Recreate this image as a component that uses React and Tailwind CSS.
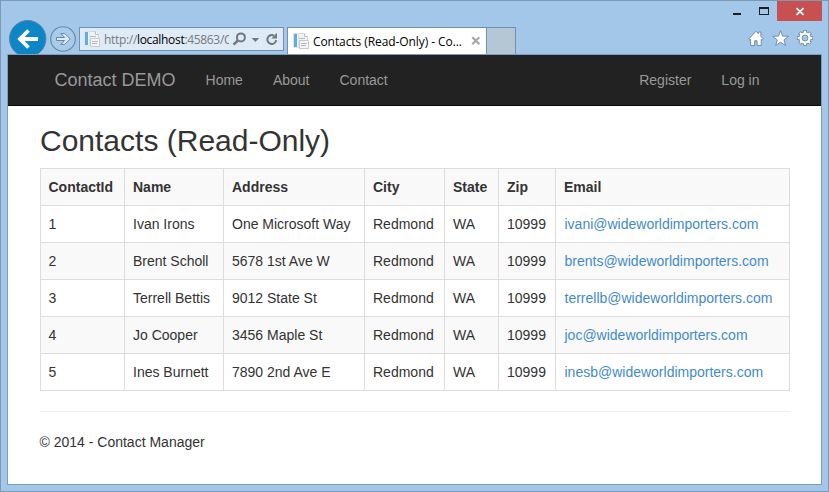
import React from "react";

const contacts = [
  ["1", "Ivan Irons", "One Microsoft Way", "Redmond", "WA", "10999", "ivani@wideworldimporters.com"],
  ["2", "Brent Scholl", "5678 1st Ave W", "Redmond", "WA", "10999", "brents@wideworldimporters.com"],
  ["3", "Terrell Bettis", "9012 State St", "Redmond", "WA", "10999", "terrellb@wideworldimporters.com"],
  ["4", "Jo Cooper", "3456 Maple St", "Redmond", "WA", "10999", "joc@wideworldimporters.com"],
  ["5", "Ines Burnett", "7890 2nd Ave E", "Redmond", "WA", "10999", "inesb@wideworldimporters.com"],
];
const headings = ["ContactId", "Name", "Address", "City", "State", "Zip", "Email"];

function PageIcon({ className }) {
  return (
    <svg className={className} width="16" height="16" viewBox="0 0 16 16">
      <path d="M4.5.5h7l3 3v5h-10z" fill="#f1f2f3" stroke="#d3d7db" />
      <path d="M11.5.5v3h3" fill="#fff" stroke="#b9bec3" />
      <path d="M6.5 7.5h9v8h-9z" fill="#f4f4f5" stroke="#c6cacf" />
      <path d="M6 5.5h6M8 10.5h6M8 12.5h5" stroke="#b4bac0" />
      <path d="M.5.5h5v14h-5z" fill="#eef3f7" stroke="#dce4ea" />
      <path d="M1 1h3v13H1z" fill="#62addb" />
    </svg>
  );
}

function WindowButtons() {
  return (
    <div className="flex h-[20px] shrink-0 justify-end pr-[6px]">
      <svg width="52" height="20" viewBox="725 1 52 20">
        <path d="M733 13h8v2h-8z" fill="#1e1e1e" />
        <path d="M759 7h10v8h-10zM760 9v5h8V9z" fill="#1e1e1e" fillRule="evenodd" />
      </svg>
      <div className="h-[20px] w-[45px] bg-[#c75050]">
        <svg width="45" height="20" viewBox="777 1 45 20">
          <path d="M796.5 8.2l7 6.6M803.5 8.2l-7 6.6" stroke="#fff" strokeWidth="1.7" />
        </svg>
      </div>
    </div>
  );
}

function NavigationBar() {
  return (
    <div className="flex h-[33px] shrink-0">
      <svg className="-mt-px shrink-0" width="78" height="34" viewBox="1 20 78 34">
        <circle cx="27.7" cy="38.7" r="18.2" fill="#0c86c6" stroke="#5f7f9c" />
        <path d="M38 39H20M28.5 30.5l-8.5 8.5 8.5 8.5" fill="none" stroke="#fff" strokeWidth="3.8" />
        <circle cx="63" cy="39" r="12.3" fill="#a9cbea" stroke="#6585a5" strokeWidth="1.1" />
        <path d="M56.5 37.5h8.2l-3.9-3.9h4l5.4 5.4-5.4 5.4h-4l3.9-3.9h-8.2z" fill="#deebf7" stroke="#6686a5" />
      </svg>
      <div className="mt-[6px] flex h-[24px] w-[205px] shrink-0 items-center border border-[#7390b0] bg-[#deeaf6]">
        <PageIcon className="ml-[4px] shrink-0" />
        <div className="ml-[4px] mt-[2px] w-[125px] overflow-hidden whitespace-nowrap font-['Open_Sans','Noto_Sans',sans-serif] text-[12px] leading-[20px] tracking-[-0.32px] text-[#777b80]">
          http://<span className="text-black">localhost</span>:45863/C
        </div>
        <svg className="shrink-0" width="54" height="22" viewBox="229 28 54 22">
          <circle cx="240.9" cy="37.4" r="4" fill="none" stroke="#717880" strokeWidth="2" />
          <path d="M238 40.3l-4.4 4.4" stroke="#717880" strokeWidth="2.6" />
          <path d="M251.6 38h7.6l-3.8 4z" fill="#717880" />
          <path d="M276.3 40.2a4.5 4.5 0 1 1-2.3-4.7" fill="none" stroke="#717880" strokeWidth="2" />
          <path d="M277 32.8v5.6h-5.6z" fill="#717880" />
        </svg>
      </div>
      <div className="ml-[3px] mt-[6px] flex h-[27px] w-[200px] shrink-0 items-center border border-b-0 border-[#7390b0] bg-white">
        <PageIcon className="ml-[5px] shrink-0" />
        <div className="ml-[4px] mt-[2px] w-[156px] whitespace-nowrap font-['Open_Sans','Noto_Sans',sans-serif] text-[12px] leading-[20px] tracking-[-0.08px] text-black">
          Contacts (Read-Only) - Co...
        </div>
        <svg className="ml-[2px] shrink-0" width="10" height="10" viewBox="0 0 10 10">
          <path d="M1.3 1.3l7 7M8.3 1.3l-7 7" stroke="#a4a4a4" strokeWidth="2" />
        </svg>
      </div>
      <div className="mt-[6px] h-[27px] w-[29px] shrink-0 border border-b-0 border-l-0 border-[#7390b0] bg-[#b5c7d5]" />
      <svg className="ml-auto mr-[6px] shrink-0" width="75" height="33" viewBox="747 21 75 33">
        <path d="M748.8 39l7.2-7.8 2.3 2.4V32h2.6v4.4l2.4 2.6-1.3 1.2-.8-.8v6.1h-4.1v-4.8h-2.4v4.8h-4.1v-6.1l-.6.8z" fill="#fff" stroke="#6884a0" strokeWidth=".9" />
        <path d="M780.6 30.6l2 5.5 5.9.2-4.6 3.6 1.7 5.6-5-3.3-4.9 3.3 1.6-5.6-4.6-3.6 5.9-.2z" fill="#fff" stroke="#6884a0" strokeWidth=".9" />
        <g fill="none" stroke="#6884a0">
          <circle cx="805" cy="38" r="4.2" strokeWidth="4.2" />
          <path d="M805 30v16M797 38h16M799.4 32.4l11.2 11.2M810.6 32.4l-11.2 11.2" strokeWidth="3.5" />
        </g>
        <path d="M805 30.7v14.6M797.7 38h14.6M799.9 32.9l10.2 10.2M810.1 32.9l-10.2 10.2" stroke="#fff" strokeWidth="2" />
        <circle cx="805" cy="38" r="4.4" fill="#a2c7e9" stroke="#fff" strokeWidth="2.7" />
        <circle cx="805" cy="38" r="3" fill="#a2c7e9" stroke="#6884a0" strokeWidth=".8" />
      </svg>
    </div>
  );
}

export default function App() {
  return (
    <div className="flex h-[492px] w-[829px] flex-col overflow-hidden border border-[#7c9ab8] bg-[#a2c7e9] font-['Liberation_Sans',Arial,sans-serif] text-[14px] leading-[20px] text-[#333]">
      <WindowButtons />
      <NavigationBar />
      <main className="ml-[6px] h-[431px] w-[815px] shrink-0 border border-[#7c9cc0] bg-white">
        <nav className="flex h-[51px] items-center border-b border-[#080808] bg-[#222] pl-[46.5px] pr-[61.5px] text-[#999]">
          <span className="text-[18px]">Contact DEMO</span>
          <span className="ml-[30px]">Home</span>
          <span className="ml-[30px]">About</span>
          <span className="ml-[30px]">Contact</span>
          <span className="ml-auto">Register</span>
          <span className="ml-[30px]">Log in</span>
        </nav>
        <div className="pl-[32px] pr-[31px]">
          <h2 className="pt-[18px] text-[30px] leading-[33px]">Contacts (Read-Only)</h2>
          <table className="mt-[11px] w-[750px] table-fixed border-collapse border border-[#ddd]">
            <colgroup>
              <col className="w-[84px]" />
              <col className="w-[99px]" />
              <col className="w-[141px]" />
              <col className="w-[80px]" />
              <col className="w-[54px]" />
              <col className="w-[57px]" />
              <col className="w-[234px]" />
            </colgroup>
            <tbody>
              <tr className="h-[37px] bg-[#f9f9f9]">
                {headings.map((h) => (
                  <th key={h} className="border border-[#ddd] p-[8px] text-left font-bold first:pl-[7.5px]">{h}</th>
                ))}
              </tr>
              {contacts.map((row) => (
                <tr key={row[0]} className="h-[37px] odd:bg-[#f9f9f9]">
                  {row.map((cell, i) => (
                    <td key={i} className="whitespace-nowrap border border-[#ddd] p-[8px] first:pl-[7.5px] last:pl-[8.5px]">
                      {i === 6 ? <a className="text-[#428bca]">{cell}</a> : cell}
                    </td>
                  ))}
                </tr>
              ))}
            </tbody>
          </table>
          <hr className="mt-[20px] border-t border-[#eee]" />
          <footer className="-ml-[0.5px] mt-[20px]">© 2014 - Contact Manager</footer>
        </div>
      </main>
    </div>
  );
}
